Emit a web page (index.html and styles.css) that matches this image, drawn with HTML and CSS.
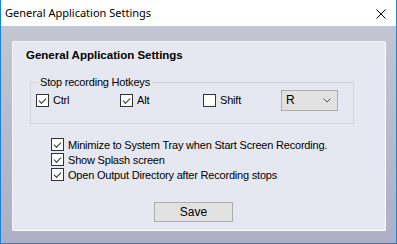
FILE: index.html
```html
<!DOCTYPE html>
<html lang="en">
<head>
<meta charset="UTF-8">
<title>General Application Settings</title>
<link rel="stylesheet" href="styles.css">
</head>
<body>
<div class="window">
    <div class="titlebar">
        <span class="title">General Application Settings</span>
        <svg class="close" width="10" height="10" viewBox="0 0 10 10">
            <path d="M0.5 0.5 L9.5 9.5 M9.5 0.5 L0.5 9.5" stroke="#000" stroke-width="1" fill="none"/>
        </svg>
    </div>
    <div class="client">
        <div class="panel">
            <h2 class="heading">General Application Settings</h2>
            <fieldset class="group">
                <legend>Stop recording Hotkeys</legend>
                <div class="hotkeys">
                    <label class="check ctrl"><span class="box checked"></span>Ctrl</label>
                    <label class="check alt"><span class="box checked"></span>Alt</label>
                    <label class="check shift"><span class="box"></span>Shift</label>
                    <div class="combo">
                        <span>R</span>
                        <svg width="8" height="5" viewBox="0 0 8 5">
                            <polyline points="0.5,0.5 4,4 7.5,0.5" stroke="#555" stroke-width="1" fill="none"/>
                        </svg>
                    </div>
                </div>
            </fieldset>
            <div class="options">
                <label class="check"><span class="box checked"></span>Minimize to System Tray when Start Screen Recording.</label>
                <label class="check"><span class="box checked"></span>Show Splash screen</label>
                <label class="check"><span class="box checked"></span>Open Output Directory after Recording stops</label>
            </div>
            <div class="actions">
                <button class="save">Save</button>
            </div>
        </div>
    </div>
</div>
</body>
</html>
```

FILE: styles.css
```css
body {
    margin: 0;
    font-family: 'Liberation Sans', Arial, sans-serif;
    font-size: 11px;
    letter-spacing: -0.2px;
    color: #000;
}

.window {
    width: 395px;
    height: 243px;
    border: 1px solid #1883d7;
    border-top: none;
    display: flex;
    flex-direction: column;
}

.titlebar {
    height: 26px;
    background: #fff;
    display: flex;
    align-items: center;
    justify-content: space-between;
    padding: 0 10px 0 4px;
    flex-shrink: 0;
}

.title {
    font-family: 'Noto Sans', sans-serif;
    font-size: 11px;
    letter-spacing: 0;
    margin-top: -1px;
}

.close {
    margin-top: 1px;
}

.client {
    flex: 1;
    background: linear-gradient(#c2c6d2, #adafc6);
    padding: 15px 10px 12px 11px;
}

.panel {
    height: 188px;
    background: #e6e8f1;
    border: 1px solid #f4f5f9;
    border-right-color: #fff;
    border-bottom-color: #fff;
    border-radius: 2px;
    padding: 0 0 0 13px;
}

.heading {
    font-family: 'Liberation Sans', Arial, sans-serif;
    font-size: 11.5px;
    letter-spacing: 0;
    font-weight: bold;
    margin: 7px 0 0;
    height: 18px;
}

.group {
    box-sizing: border-box;
    margin: 9px 0 0 4px;
    width: 324px;
    height: 48px;
    border: 1px solid #d2d4dc;
    padding: 0 0 0 5px;
}

.group legend {
    padding: 0 2px;
    margin-left: 2px;
}

.hotkeys {
    display: flex;
    align-items: center;
    height: 22px;
    margin-top: 1px;
}

.check {
    display: flex;
    align-items: center;
    gap: 4px;
    height: 15px;
}

.ctrl { width: 84px; }
.alt { width: 83px; }
.shift { width: 78px; }

.box {
    width: 11px;
    height: 11px;
    border: 1px solid #333;
    background: #fff;
    position: relative;
    flex-shrink: 0;
}

.box.checked::after {
    content: "";
    position: absolute;
    left: 2px;
    top: 1px;
    width: 6px;
    height: 3px;
    border-left: 1px solid #333;
    border-bottom: 1px solid #333;
    transform: translate(0, 2px) rotate(-45deg);
}

.combo {
    border: 1px solid #adadad;
    background: #e1e1e1;
    display: flex;
    align-items: center;
    justify-content: space-between;
    padding: 0 6px 0 4px;
    box-sizing: border-box;
    width: 57px;
    height: 21px;
    font-size: 12px;
}

.options {
    margin: 13px 0 0 25px;
    display: flex;
    flex-direction: column;
}

.actions {
    display: flex;
    margin-top: 20px;
    padding-left: 128px;
}

.save {
    width: 79px;
    height: 20px;
    border: 1px solid #adadad;
    background: #e1e1e1;
    font-family: 'Liberation Sans', Arial, sans-serif;
    font-size: 12px;
    padding: 0;
}
```
